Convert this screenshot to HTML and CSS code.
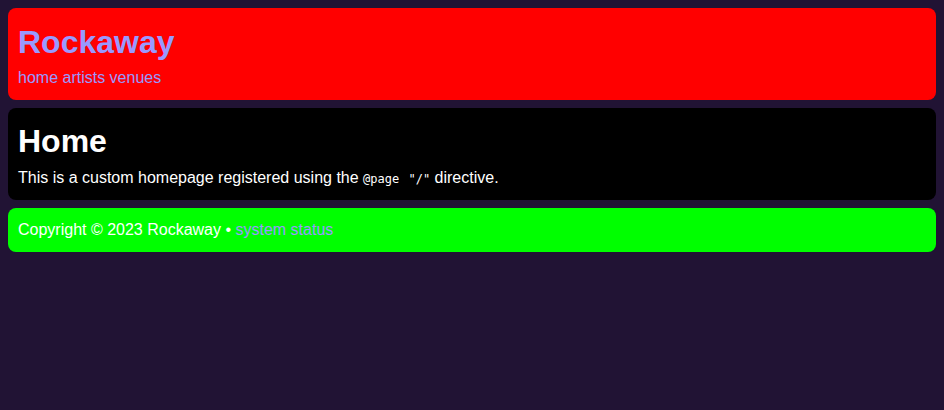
FILE: index.html
```html
<!DOCTYPE html>
<html>
<head>
<meta charset="utf-8">
<link rel="stylesheet" href="styles.css">
</head>
<body>
<div class="page">
  <header class="site-header">
    <h1 class="brand">Rockaway</h1>
    <nav class="nav"><a href="#">home</a> <a href="#">artists</a> <a href="#">venues</a></nav>
  </header>
  <main class="content">
    <h1 class="title">Home</h1>
    <p class="text">This is a custom homepage registered using the <code>@page "/"</code> directive.</p>
  </main>
  <footer class="site-footer">Copyright © 2023 Rockaway • <a href="#">system status</a></footer>
</div>
</body>
</html>
```
FILE: styles.css
```css
html, body { margin: 0; padding: 0; }
body {
  background: #211334;
  font-family: "Liberation Sans", Arial, sans-serif;
  font-size: 16px;
  color: #fff;
}
.page {
  display: flex;
  flex-direction: column;
  gap: 8px;
  padding: 8px;
}
.site-header, .content, .site-footer {
  border-radius: 8px;
  padding: 10px;
}
.site-header { background: #ff0000; padding-bottom: 13px; }
.content { background: #000; padding-bottom: 12px; }
.site-footer { background: #00ff00; padding: 12px 10px; line-height: 20px; }
a { color: #9999ff; text-decoration: none; }
.brand {
  margin: 6px 0 8px;
  font-size: 32px;
  color: #9999ff;
  line-height: 37px;
}
.nav { line-height: 18px; }
.title { margin: 5px 0 9px; font-size: 32px; line-height: 37px; }
.text { margin: 0; line-height: 18px; }
code { font-family: "DejaVu Sans Mono", monospace; font-size: 12px; word-spacing: 2px; }
```
